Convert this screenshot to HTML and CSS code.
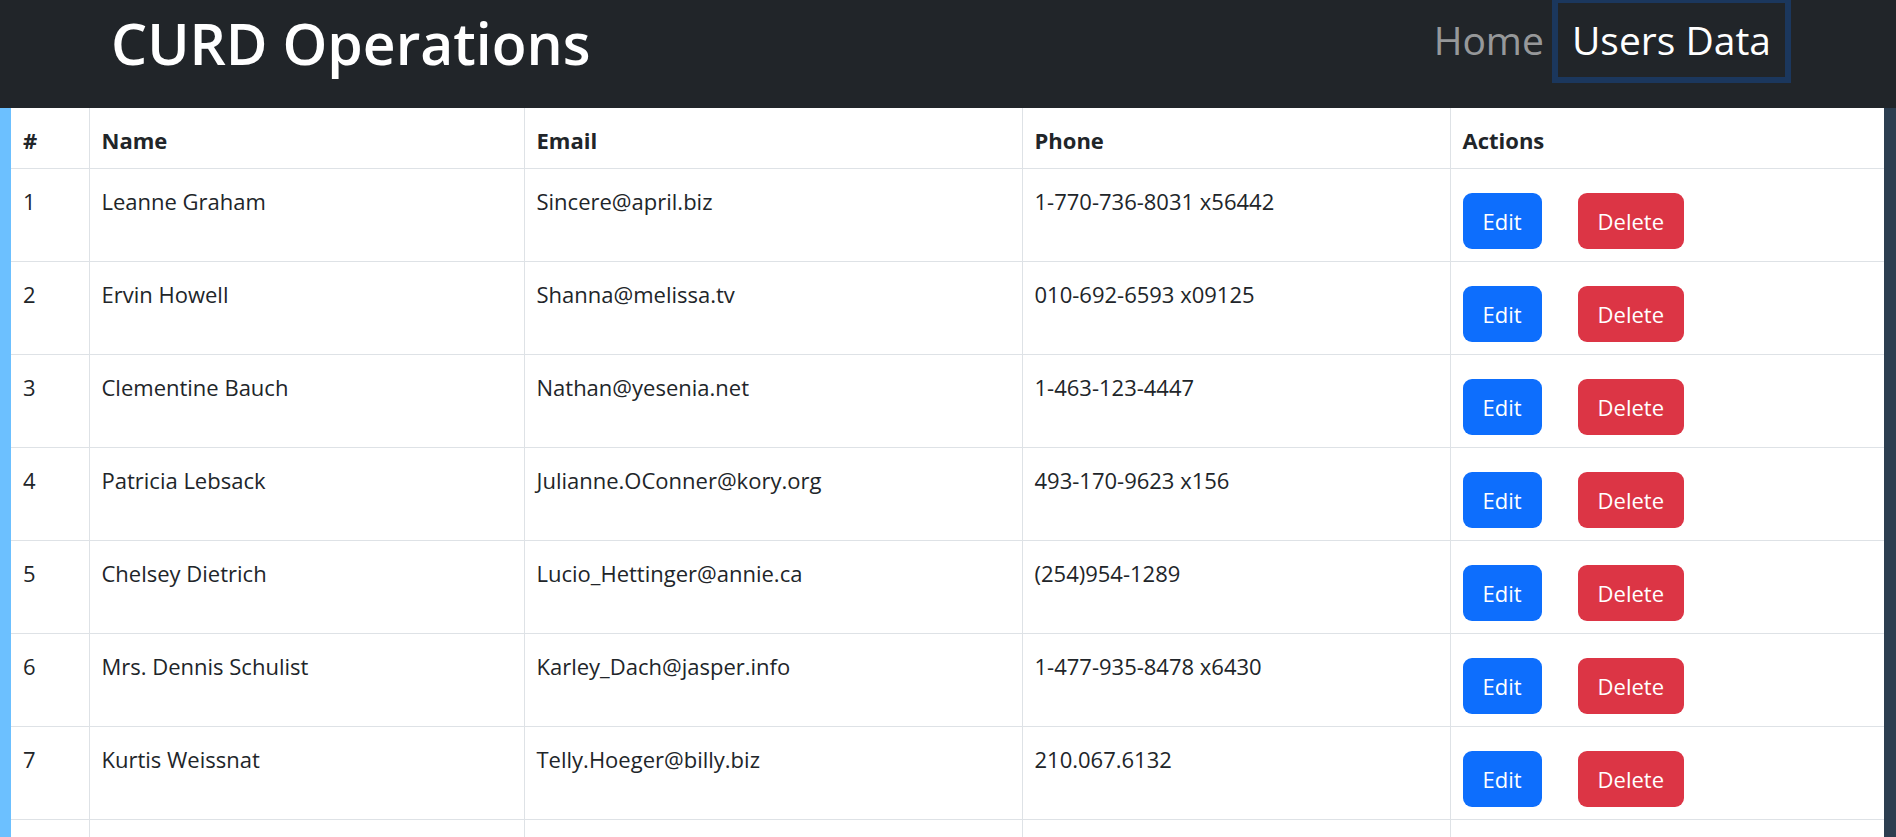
FILE: index.html
```html
<!DOCTYPE html>
<html lang="en">
<head>
<meta charset="utf-8">
<title>CURD Operations</title>
<link rel="stylesheet" href="styles.css">
</head>
<body>
<nav class="navbar">
  <div class="container">
    <h1 class="brand">CURD Operations</h1>
    <ul class="nav">
      <li><a class="nav-link" href="#">Home</a></li>
      <li><a class="nav-link active" href="#">Users Data</a></li>
    </ul>
  </div>
</nav>
<main class="page">
  <table class="table">
    <colgroup>
      <col class="c-id"><col class="c-name"><col class="c-email"><col class="c-phone"><col class="c-actions">
    </colgroup>
    <thead>
      <tr><th>#</th><th>Name</th><th>Email</th><th>Phone</th><th>Actions</th></tr>
    </thead>
    <tbody>
      <tr><td>1</td><td>Leanne Graham</td><td>Sincere@april.biz</td><td>1-770-736-8031 x56442</td><td><button class="btn btn-edit">Edit</button><button class="btn btn-delete">Delete</button></td></tr>
      <tr><td>2</td><td>Ervin Howell</td><td>Shanna@melissa.tv</td><td>010-692-6593 x09125</td><td><button class="btn btn-edit">Edit</button><button class="btn btn-delete">Delete</button></td></tr>
      <tr><td>3</td><td>Clementine Bauch</td><td>Nathan@yesenia.net</td><td>1-463-123-4447</td><td><button class="btn btn-edit">Edit</button><button class="btn btn-delete">Delete</button></td></tr>
      <tr><td>4</td><td>Patricia Lebsack</td><td>Julianne.OConner@kory.org</td><td>493-170-9623 x156</td><td><button class="btn btn-edit">Edit</button><button class="btn btn-delete">Delete</button></td></tr>
      <tr><td>5</td><td>Chelsey Dietrich</td><td>Lucio_Hettinger@annie.ca</td><td>(254)954-1289</td><td><button class="btn btn-edit">Edit</button><button class="btn btn-delete">Delete</button></td></tr>
      <tr><td>6</td><td>Mrs. Dennis Schulist</td><td>Karley_Dach@jasper.info</td><td>1-477-935-8478 x6430</td><td><button class="btn btn-edit">Edit</button><button class="btn btn-delete">Delete</button></td></tr>
      <tr><td>7</td><td>Kurtis Weissnat</td><td>Telly.Hoeger@billy.biz</td><td>210.067.6132</td><td><button class="btn btn-edit">Edit</button><button class="btn btn-delete">Delete</button></td></tr>
      <tr><td>8</td><td>Nicholas Runolfsdottir V</td><td>Sherwood@rosamond.me</td><td>586.493.6943 x140</td><td><button class="btn btn-edit">Edit</button><button class="btn btn-delete">Delete</button></td></tr>
    </tbody>
  </table>
</main>
</body>
</html>
```
FILE: styles.css
```css
html, body {
  margin: 0;
  padding: 0;
  overflow: hidden;
}
body {
  font-family: "Open Sans", "Noto Sans", sans-serif;
  font-size: 22px;
  line-height: 36px;
  color: #212529;
  background: #ffffff;
}
.navbar {
  background: #212529;
  height: 108px;
}
.container {
  width: 1710px;
  margin: 0 auto;
  padding: 0 18px;
  box-sizing: border-box;
  height: 100%;
  display: flex;
  justify-content: space-between;
  align-items: flex-start;
}
.brand {
  margin: 9px 0 0;
  font-size: 57px;
  line-height: 68px;
  font-weight: 600;
  color: #ffffff;
}
.nav {
  list-style: none;
  margin: 3px 0 0;
  padding: 0;
  display: flex;
}
.nav-link {
  display: block;
  padding: 8px 14px;
  font-size: 39px;
  line-height: 58px;
  font-weight: 500;
  color: rgba(255, 255, 255, 0.55);
  text-decoration: none;
}
.nav-link.active {
  color: #ffffff;
  box-shadow: 0 0 0 6px rgba(13, 110, 253, 0.25);
}
.page {
  border-left: 11px solid #6cc0ff;
  border-right: 12px solid #2c3e50;
}
.table {
  width: 100%;
  border-collapse: collapse;
  table-layout: fixed;
}
.c-id { width: 78px; }
.c-name { width: 435px; }
.c-email { width: 498px; }
.c-phone { width: 428px; }
.c-actions { width: auto; }
.table th,
.table td {
  border: 1px solid #dee2e6;
  padding: 14px 12px 10px;
  text-align: left;
  vertical-align: top;
  white-space: nowrap;
}
.table th {
  font-weight: 700;
}
.table tr:first-child th {
  border-top: 0;
}
.table th:first-child,
.table td:first-child {
  border-left: 0;
}
.table th:last-child,
.table td:last-child {
  border-right: 0;
}
.btn {
  display: inline-block;
  vertical-align: top;
  margin: 10px 0 2px;
  height: 56px;
  padding: 10px 20px;
  box-sizing: border-box;
  border: 0;
  border-radius: 9px;
  font-family: inherit;
  font-size: 22px;
  line-height: 36px;
  color: #ffffff;
}
.btn-edit {
  background: #0d6efd;
}
.btn-delete {
  background: #dc3545;
  margin-left: 36px;
}
```
